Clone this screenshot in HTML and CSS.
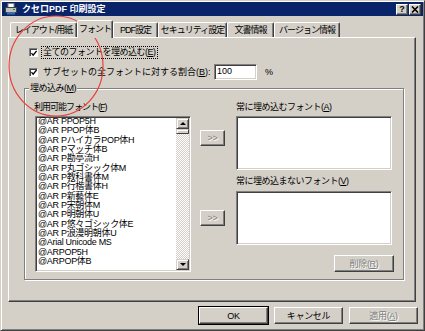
FILE: index.html
```html
<!DOCTYPE html>
<html lang="ja">
<head>
  <meta charset="UTF-8">
  <title>クセロPDF 印刷設定</title>
  <link rel="stylesheet" href="styles.css">
</head>
<body>
  <div class="window">
    <div class="titlebar">
      <svg class="app-icon" width="12" height="12" viewBox="0 0 12 12">
        <rect x="3" y="0.5" width="6" height="5" fill="#fff" stroke="#808080"/>
        <rect x="0.5" y="4.5" width="11" height="5" fill="#c0c0c0" stroke="#404040"/>
        <rect x="2" y="9" width="8" height="2.5" fill="#3a6ea5"/>
        <rect x="8" y="6" width="2" height="1" fill="#00a000"/>
      </svg>
      <span class="title">クセロPDF 印刷設定</span>
      <div class="title-buttons">
        <span class="tbtn">?</span>
        <span class="tbtn">
          <svg width="8" height="7" viewBox="0 0 8 7"><path d="M1 0.5 L7 6.5 M7 0.5 L1 6.5" stroke="#000" stroke-width="1.6"/></svg>
        </span>
      </div>
    </div>

    <div class="tabs">
      <div class="tab tab-layout">レイアウト/用紙</div>
      <div class="tab tab-font active">フォント</div>
      <div class="tab tab-pdf">PDF設定</div>
      <div class="tab tab-security">セキュリティ設定</div>
      <div class="tab tab-doc">文書情報</div>
      <div class="tab tab-version">バージョン情報</div>
    </div>

    <div class="panel">
      <div class="row row-embed-all">
        <span class="check"><svg width="7" height="7" viewBox="0 0 7 7"><path d="M0.5 3 L2.5 5.5 L6.5 0.5" fill="none" stroke="#000" stroke-width="1.5"/></svg></span>
        <span class="label focus">全てのフォントを埋め込む(<u>E</u>)</span>
      </div>
      <div class="row row-subset">
        <span class="check"><svg width="7" height="7" viewBox="0 0 7 7"><path d="M0.5 3 L2.5 5.5 L6.5 0.5" fill="none" stroke="#000" stroke-width="1.5"/></svg></span>
        <span class="label ratio-label">サブセットの全フォントに対する割合(<u>B</u>):</span>
        <span class="textbox">100</span>
        <span class="pct">%</span>
      </div>

      <div class="group">
        <span class="group-label">埋め込み(<u>M</u>)</span>

        <div class="col col-avail">
          <div class="caption">利用可能フォント(<u>F</u>)</div>
          <div class="listbox">
            <ul class="items">
              <li>@AR PPOP5H</li>
              <li>@AR PPOP体B</li>
              <li>@AR PハイカラPOP体H</li>
              <li>@AR Pマッチ体B</li>
              <li>@AR P勘亭流H</li>
              <li>@AR P丸ゴシック体M</li>
              <li>@AR P教科書体M</li>
              <li>@AR P行楷書体H</li>
              <li>@AR P新藝体E</li>
              <li>@AR P宋朝体M</li>
              <li>@AR P明朝体U</li>
              <li>@AR P悠々ゴシック体E</li>
              <li>@AR P浪漫明朝体U</li>
              <li>@Arial Unicode MS</li>
              <li>@ARPOP5H</li>
              <li>@ARPOP体B</li>
            </ul>
            <div class="scrollbar">
              <span class="sb-btn"><span class="arrow-up"></span></span>
              <span class="sb-thumb"></span>
              <span class="sb-track"></span>
              <span class="sb-btn"><span class="arrow-down"></span></span>
            </div>
          </div>
        </div>

        <div class="col col-move">
          <button class="btn btn-move disabled">&gt;&gt;</button>
          <button class="btn btn-move btn-move-2 disabled">&gt;&gt;</button>
        </div>

        <div class="col col-fixed">
          <div class="caption">常に埋め込むフォント(<u>A</u>)</div>
          <div class="listbox box-small"></div>
          <div class="caption caption-never">常に埋め込まないフォント(<u>V</u>)</div>
          <div class="listbox box-small"></div>
          <button class="btn btn-delete disabled">削除(<u>R</u>)</button>
        </div>
      </div>
    </div>

    <div class="footer">
      <button class="btn btn-footer default">OK</button>
      <button class="btn btn-footer">キャンセル</button>
      <button class="btn btn-footer disabled">適用(<u>A</u>)</button>
    </div>
  </div>

  <svg class="annotation" width="425" height="331" viewBox="0 0 425 331">
    <ellipse cx="56" cy="66" rx="47" ry="50" fill="none" stroke="#e8403c" stroke-width="1.2"/>
  </svg>
</body>
</html>
```

FILE: styles.css
```css
body {
  margin: 0;
  font-family: "Liberation Sans", "Noto Sans CJK JP", sans-serif;
  font-size: 9px;
  letter-spacing: -0.5px;
  color: #000;
  background: #d4d0c8;
  position: relative;
  width: 425px;
  height: 331px;
  overflow: hidden;
}

u {
  text-decoration: underline;
}

.window {
  box-sizing: border-box;
  width: 425px;
  height: 331px;
  padding: 1px;
  border: 1px solid;
  border-color: #d4d0c8 #404040 #404040 #d4d0c8;
  box-shadow: inset 1px 1px #fff, inset -1px -1px #808080;
  background: #d4d0c8;
}

/* title bar */
.titlebar {
  height: 14px;
  background: #0a246a;
  display: flex;
  align-items: center;
  padding-left: 3px;
}

.app-icon {
  flex: none;
}

.title {
  margin-left: 5px;
  color: #fff;
  font-weight: bold;
  font-size: 9px;
  letter-spacing: 0;
  line-height: 14px;
}

.title-buttons {
  margin-left: auto;
  margin-right: 2px;
  display: flex;
}

.tbtn {
  box-sizing: border-box;
  width: 12px;
  height: 11px;
  background: #d4d0c8;
  border: 1px solid;
  border-color: #fff #404040 #404040 #fff;
  box-shadow: inset -1px -1px #808080;
  display: flex;
  align-items: center;
  justify-content: center;
  font-weight: bold;
  font-size: 9px;
  letter-spacing: 0;
  line-height: 9px;
}

.tbtn + .tbtn {
  margin-left: 1px;
}

/* tabs */
.tabs {
  height: 17px;
  margin: 4px 0 0 8px;
  display: flex;
  align-items: flex-end;
}

.tab {
  box-sizing: border-box;
  flex: none;
  height: 15px;
  border: 1px solid;
  border-bottom: none;
  border-color: #fff #404040 transparent #fff;
  border-radius: 2px 2px 0 0;
  box-shadow: inset -1px 0 #808080;
  display: flex;
  justify-content: center;
  line-height: 15px;
  letter-spacing: -1px;
  white-space: nowrap;
}

.tab.active {
  height: 18px;
  margin-bottom: -1px;
  position: relative;
  z-index: 1;
  background: #d4d0c8;
  line-height: 16px;
}

.tab-layout { width: 67px; }
.tab-font { width: 36px; }
.tab-pdf { width: 45px; }
.tab-security { width: 69px; }
.tab-doc { width: 47px; }
.tab-version { width: 66px; }

/* tab page */
.panel {
  box-sizing: border-box;
  width: 408px;
  height: 265px;
  margin-left: 6px;
  padding: 8px 0 0 15px;
  border: 1px solid;
  border-color: #fff #404040 #404040 #fff;
  box-shadow: inset -1px -1px #808080;
}

.row {
  display: flex;
  align-items: center;
  padding-left: 5px;
}

.row-embed-all {
  height: 13px;
}

.row-subset {
  height: 16px;
  margin-top: 5px;
}

.check {
  box-sizing: border-box;
  flex: none;
  width: 9px;
  height: 9px;
  background: #fff;
  border: 1px solid;
  border-color: #808080 #fff #fff #808080;
  box-shadow: inset 1px 1px #404040;
  display: flex;
  align-items: center;
  justify-content: center;
}

.check svg {
  margin: 1px 0 0 1px;
}

.label {
  margin-left: 3px;
  line-height: 11px;
  white-space: nowrap;
}

.focus {
  padding: 0 1px;
  border: 1px dotted #000;
}

.ratio-label {
  flex: none;
  width: 173px;
  padding-left: 2px;
  box-sizing: border-box;
  letter-spacing: 0;
}

.textbox {
  box-sizing: border-box;
  width: 43px;
  height: 16px;
  padding-left: 2px;
  background: #fff;
  border: 1px solid;
  border-color: #808080 #fff #fff #808080;
  box-shadow: inset 1px 1px #404040, inset -1px -1px #d4d0c8;
  line-height: 13px;
  letter-spacing: 0;
}

.pct {
  margin-left: 8px;
}

/* embed group */
.group {
  position: relative;
  box-sizing: border-box;
  width: 380px;
  height: 192px;
  margin-top: 8px;
  padding: 13px 0 0 10px;
  border: 1px solid #808080;
  box-shadow: inset 1px 1px #fff, 1px 1px #fff;
  display: flex;
}

.group-label {
  position: absolute;
  top: -6px;
  left: 4px;
  padding: 0 1px;
  background: #d4d0c8;
  line-height: 11px;
}

.caption {
  line-height: 11px;
  margin-bottom: 3px;
  white-space: nowrap;
}

.col-avail {
  width: 156px;
}

.col-avail .caption {
  margin-left: -1px;
  letter-spacing: -1px;
}

.listbox {
  box-sizing: border-box;
  background: #fff;
  border: 1px solid;
  border-color: #808080 #fff #fff #808080;
  box-shadow: inset 1px 1px #404040, inset -1px -1px #d4d0c8;
}

.col-avail .listbox {
  height: 156px;
  padding: 1px;
  display: flex;
}

.items {
  flex: 1;
  margin: -1px 0 0;
  padding: 0 0 0 1px;
  list-style: none;
  overflow: hidden;
  letter-spacing: -0.3px;
}

.items li {
  line-height: 9.33px;
  height: 9.33px;
  white-space: nowrap;
}

.scrollbar {
  width: 13px;
  display: flex;
  flex-direction: column;
}

.sb-btn {
  box-sizing: border-box;
  height: 11px;
  background: #d4d0c8;
  border: 1px solid;
  border-color: #d4d0c8 #404040 #404040 #d4d0c8;
  box-shadow: inset 1px 1px #fff, inset -1px -1px #808080;
  display: flex;
  align-items: center;
  justify-content: center;
}

.sb-thumb {
  box-sizing: border-box;
  height: 5px;
  background: #d4d0c8;
  border: 1px solid;
  border-color: #d4d0c8 #404040 #404040 #d4d0c8;
  box-shadow: inset 1px 1px #fff;
}

.sb-track {
  flex: 1;
  background: repeating-conic-gradient(#d4d0c8 0 25%, #fff 0 50%) 0 0 / 2px 2px;
}

.arrow-up,
.arrow-down {
  width: 0;
  height: 0;
  border-left: 3px solid transparent;
  border-right: 3px solid transparent;
}

.arrow-up {
  border-bottom: 3px solid #000;
}

.arrow-down {
  border-top: 3px solid #000;
}

.col-move {
  width: 25px;
  margin-left: 9px;
  display: flex;
  flex-direction: column;
}

.col-fixed {
  width: 156px;
  margin-left: 11px;
  display: flex;
  flex-direction: column;
}

.box-small {
  height: 54px;
}

.caption-never {
  margin-top: 6px;
  margin-bottom: 4px;
}

/* buttons */
.btn {
  box-sizing: border-box;
  margin: 0;
  padding: 0;
  font-family: inherit;
  font-size: 9px;
  letter-spacing: -0.3px;
  color: #000;
  background: #d4d0c8;
  border: 1px solid;
  border-color: #fff #404040 #404040 #fff;
  box-shadow: inset -1px -1px #808080;
  line-height: 14px;
  text-align: center;
}

.btn.disabled {
  color: #808080;
  text-shadow: 1px 1px #fff;
}

.btn-move {
  width: 25px;
  height: 16px;
  margin-top: 28px;
}

.btn-move-2 {
  margin-top: 64px;
}

.btn-delete {
  align-self: flex-end;
  width: 60px;
  height: 17px;
  margin: 10px -2px 0 0;
}

.footer {
  margin-top: 5px;
  padding-right: 5px;
  display: flex;
  justify-content: flex-end;
  gap: 6px;
}

.btn-footer {
  width: 69px;
  height: 17px;
}

.btn-footer.default {
  outline: 1px solid #000;
  outline-offset: 0;
}

.annotation {
  position: absolute;
  top: 0;
  left: 0;
  pointer-events: none;
}
```
